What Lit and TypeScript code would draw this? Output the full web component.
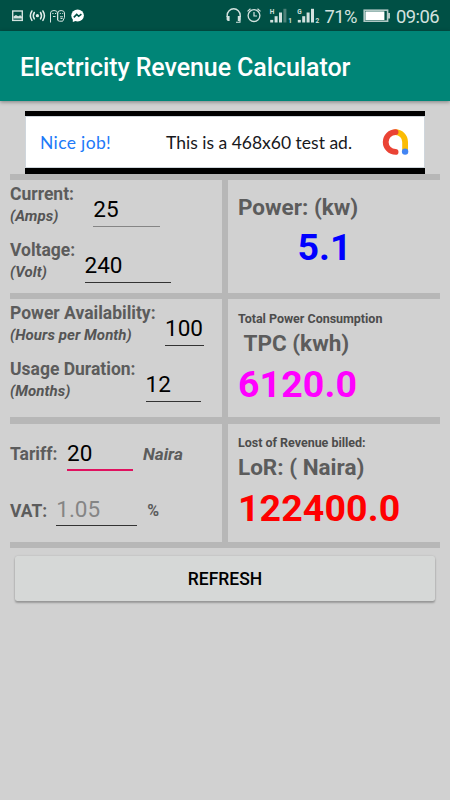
import { LitElement, html, css, svg } from "lit";
import { customElement, property } from "lit/decorators.js";

@customElement("status-bar")
class StatusBar extends LitElement {
  static styles = css`
    :host { display: block; height: 31px; background: #005045; color: #d5e3e1; }
    svg { display: block; }
    text { font-family: Roboto, sans-serif; fill: #d3e2df; }
    .tiny { font-weight: 700; font-size: 6.5px; }
  `;
  bars(x: number, dimLast: boolean) {
    return [0, 1, 2, 3].map((i) => svg`
      <rect x=${x + i * 4.4} y=${19.9 - i * 3.7} width="3" height=${2.6 + i * 3.7}
        fill=${dimLast && i === 3 ? "#4d8078" : "#d3e2df"} />`);
  }
  render() {
    return html`<svg width="450" height="31" viewBox="0 0 450 31" fill="none">
      <rect x="12.7" y="11" width="9.6" height="9.4" stroke="#d3e2df" stroke-width="1.4" />
      <path d="M13.5 18.5v-2l2.4-1.6 2.3 1.3 2-.9 1.8 1.4v1.8z" fill="#d3e2df" />
      <g stroke="#e3eeec" stroke-width="1.5" stroke-linecap="round">
        <circle cx="37.4" cy="15.7" r="1.6" fill="#e3eeec" stroke="none" />
        <path d="M34.3 12.5q-2 3.2 0 6.4M31.9 11q-3 4.7 0 9.4M40.5 12.5q2 3.2 0 6.4M42.9 11q3 4.7 0 9.4" />
      </g>
      <g stroke="#d3e2df" stroke-width="1">
        <path d="M50.5 22.5V13q0-2.5 3.5-2.5t3.5 2.5v7M52.3 13.5h1.2M55 13.5h1.2M53 16.5h2.5" />
        <path d="M57.8 20.5V13q0-2.5 3.3-2.5t3.4 2.5v4.5l-1.8 3.7h-3.2zM59.8 13.5h1M62.2 13.5h1M60 16.8h3M60.5 18.5h2" />
      </g>
      <ellipse cx="77.6" cy="15.5" rx="6.3" ry="6" fill="#fff" />
      <path d="M72.8 18v4l4-1.5z" fill="#fff" />
      <path d="M73.8 17.4l2.9-3 2 1.9 2.7-2.2" stroke="#005045" stroke-width="1.6" />

      <path d="M227.2 17v-1.7a6.5 6.5 0 0 1 13 0V17" stroke="#d3e2df" stroke-width="1.4" />
      <path d="M226.6 16h3v5h-1.8l-1.2-1.2zM240.8 16h-3v5h1.8l1.2-1.2z" fill="#d3e2df" />
      <path d="M240 20v2.2h-4" stroke="#d3e2df" stroke-width="1.1" />
      <circle cx="254" cy="15.6" r="5.9" stroke="#d3e2df" stroke-width="1.3" />
      <path d="M254 12v4h3M247.5 11.4l3-2.7M260.5 11.4l-3-2.7" stroke="#d3e2df" stroke-width="1.2" />
      <text class="tiny" x="269.7" y="13.6">H</text>
      ${this.bars(270.2, true)}
      <text class="tiny" x="288.3" y="22.6">1</text>
      <text class="tiny" x="297.2" y="13.6">G</text>
      ${this.bars(297.8, false)}
      <text class="tiny" x="315.6" y="22.6">2</text>
      <text x="324.6" y="22.8" font-size="18.4" textLength="33">71%</text>
      <rect x="364.2" y="10.2" width="23.4" height="11" stroke="#b1c9c5" stroke-width="1.6" />
      <rect x="365.4" y="11.4" width="19" height="8.6" fill="#fff" />
      <path d="M388 13h2v5.4h-2z" fill="#b1c9c5" />
      <text x="396" y="22.8" font-size="18.4" textLength="43.5">09:06</text>
    </svg>`;
  }
}

@customElement("ad-banner")
class AdBanner extends LitElement {
  static styles = css`
    :host {
      display: block; box-sizing: border-box; width: 400px; height: 63px; margin: 10px 0 0 25px;
      background: #000; padding: 5px 0 6px; font-family: Lato, sans-serif;
    }
    .body {
      box-sizing: border-box; height: 52px; background: #fff; border: 1px solid #cfd6dc;
      display: flex; align-items: center; padding-left: 14px; color: #17181c; font-size: 17.5px;
    }
    .job { color: #2079f8; width: 126px; letter-spacing: 0.35px; white-space: nowrap; }
    .msg { width: 214.5px; white-space: nowrap; }
  `;
  render() {
    return html`<div class="body">
      <span class="job">Nice job!</span><span class="msg">This is a 468x60 test ad.</span>
      <svg width="28" height="28" viewBox="0 0 28 28" fill="none" stroke-width="5.8" stroke-linecap="round">
        <path d="M14.3 4.1a9.8 9.8 0 0 1 9.8 9.8v9" stroke="#fbbc04" />
        <path d="M14.6 4.1a9.9 9.9 0 1 0 0 19.8" stroke="#ea4335" />
        <circle cx="24.1" cy="23.6" r="3.2" fill="#4285f4" />
      </svg>
    </div>`;
  }
}

@customElement("entry-row")
class EntryRow extends LitElement {
  @property() label = "";
  @property() unit = "";
  @property() after = "";
  @property() value = "";
  static styles = css`
    :host { display: flex; align-items: flex-start; height: 56.5px; font-family: Roboto, sans-serif; color: #5c5c5c; white-space: nowrap; }
    .caption { flex: none; width: var(--caption); padding-top: 2.6px; }
    .label { font-weight: 700; font-size: 17.5px; line-height: 22px; }
    .unit { font-weight: 700; font-style: italic; font-size: 15px; line-height: 20px; color: #555; margin-top: 1px; letter-spacing: 0.07px; }
    .entry {
      flex: none; box-sizing: border-box; width: var(--field); height: 31px; margin-top: 15.5px; color: #000;
      font-weight: 400; font-size: 22.5px; line-height: 26px; border-bottom: 1px solid #333;
    }
    :host([single]) .caption { padding-top: 19.8px; }
    :host([faint]) .entry { border-bottom: 1.5px solid #858585; }
    :host([active]) .entry { border-bottom: 2px solid #e0115f; }
    :host([hint]) .entry { color: #858585; height: 30px; }
    :host([single]) .entry { margin-top: 16.3px; }
    .after { padding-top: 19.8px; margin-left: 10px; font-weight: 700; font-size: 17.5px; line-height: 22px; }
    :host([active]) .after { font-style: italic; font-size: 17.2px; }
    :host([hint]) .after { font-size: 16px; padding-top: 20.3px; }
  `;
  render() {
    return html`<div class="caption"><div class="label">${this.label}</div>
        ${this.unit ? html`<div class="unit">${this.unit}</div>` : ""}</div>
      <div class="entry">${this.value}</div>
      ${this.after ? html`<div class="after">${this.after}</div>` : ""}`;
  }
}

@customElement("app-root")
class AppRoot extends LitElement {
  static styles = css`
    :host { display: block; height: 800px; overflow: hidden; background: #d1d1d1; font-family: Roboto, sans-serif; }
    .bar {
      height: 70px; box-sizing: border-box; padding: 3px 0 0 20px; display: flex; align-items: center;
      background: #008577; color: #fff; font-size: 25px; letter-spacing: -0.08px; font-weight: 500;
      box-shadow: 0 1px 4px rgba(0, 0, 0, 0.4);
    }
    .table {
      margin: 0 10px; width: 430px; box-sizing: border-box; border: solid #b7b7b7; border-width: 6px 0;
      display: grid; grid-template-columns: 212px 212px; grid-template-rows: 113px 118px 118px;
      gap: 6.3px 6px; background: #b7b7b7; height: 374px;
    }
    .cell { background: #d1d1d1; color: #5c5c5c; font-weight: 700; white-space: nowrap; }
    .right { padding-left: 10px; }
    .note { font-size: 12.5px; line-height: 16px; color: #4c4c4c; letter-spacing: -0.02px; }
    .name { font-size: 22.5px; line-height: 28px; }
    .total { font-size: 37.5px; line-height: 44px; letter-spacing: 0.1px; }
    .power .name { padding-top: 12.5px; }
    .power .total { color: #0000ff; padding-left: 59.5px; margin-top: 4px; }
    .tpc { padding-top: 12px; }
    .tpc .name { padding-left: 5.5px; }
    .tpc .name, .lor .name { margin-top: 2px; }
    .tpc .total { color: #ff00ff; margin-top: 5px; }
    .lor { padding-top: 11.5px; }
    .lor .total { color: #ff0000; margin-top: 5px; }
    .e1 { --caption: 83.3px; --field: 66.7px; }
    .e2 { --caption: 74.5px; --field: 86.5px; }
    .e3 { --caption: 155px; --field: 39.3px; }
    .e4 { --caption: 135.5px; --field: 55.5px; }
    .e5 { --caption: 57px; --field: 66px; }
    .e6 { --caption: 46.3px; --field: 81px; }
    .refresh {
      display: block; width: 420px; height: 45px; margin: 7.5px 0 0 15px; border: 0; border-radius: 2.5px;
      background: #d6d8d7; color: #000; font: 500 17.5px Roboto, sans-serif; padding: 2px 0 0;
      box-shadow: 0 2px 2px rgba(0, 0, 0, 0.25), 0 0 2px rgba(0, 0, 0, 0.15);
    }
  `;
  render() {
    return html`
      <status-bar></status-bar>
      <div class="bar">Electricity Revenue Calculator</div>
      <ad-banner></ad-banner>
      <div class="table">
        <div class="cell">
          <entry-row class="e1" faint label="Current:" unit="(Amps)" value="25"></entry-row>
          <entry-row class="e2" label="Voltage:" unit="(Volt)" value="240"></entry-row>
        </div>
        <div class="cell right power">
          <div class="name">Power: (kw)</div>
          <div class="total">5.1</div>
        </div>
        <div class="cell">
          <entry-row class="e3" label="Power Availability:" unit="(Hours per Month)" value="100"></entry-row>
          <entry-row class="e4" label="Usage Duration:" unit="(Months)" value="12"></entry-row>
        </div>
        <div class="cell right tpc">
          <div class="note">Total Power Consumption</div>
          <div class="name">TPC (kwh)</div>
          <div class="total">6120.0</div>
        </div>
        <div class="cell">
          <entry-row class="e5" single active label="Tariff:" value="20" after="Naira"></entry-row>
          <entry-row class="e6" single hint label="VAT:" value="1.05" after="%"></entry-row>
        </div>
        <div class="cell right lor">
          <div class="note">Lost of Revenue billed:</div>
          <div class="name">LoR: ( Naira)</div>
          <div class="total">122400.0</div>
        </div>
      </div>
      <button class="refresh">REFRESH</button>
    `;
  }
}
